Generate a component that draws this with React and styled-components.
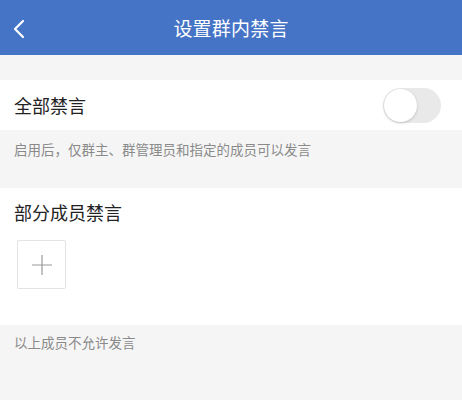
import React from "react";
import styled, { createGlobalStyle } from "styled-components";

const Global = createGlobalStyle`
  html, body { margin: 0; padding: 0; background: #f5f5f5; }
  body { font-family: "Noto Sans CJK SC", "Noto Sans", sans-serif; }
  * { box-sizing: border-box; }
`;

const Page = styled.div`
  width: 462px;
  height: 400px;
  background: #f5f5f5;
  display: flex;
  flex-direction: column;
  overflow: hidden;
`;

const Header = styled.div`
  height: 55px;
  background: #4574c6;
  display: flex;
  align-items: center;
  justify-content: center;
  position: relative;
  flex-shrink: 0;
`;

const Back = styled.div`
  position: absolute;
  left: 12px;
  top: 19px;
  width: 16px;
  height: 20px;
  display: flex;
`;

const Title = styled.div`
  color: #fff;
  font-size: 19px;
  line-height: 1;
  letter-spacing: 0.2px;
`;

const Gap = styled.div`
  height: ${(p) => p.h}px;
  flex-shrink: 0;
`;

const Row = styled.div`
  height: 50px;
  background: #fff;
  display: flex;
  align-items: center;
  justify-content: space-between;
  padding: 0 20px 0 14px;
  flex-shrink: 0;
`;

const Label = styled.div`
  font-size: 18px;
  color: #222;
  line-height: 1;
`;

const Track = styled.div`
  width: 58px;
  height: 35px;
  border-radius: 18px;
  background: #e9e9e9;
  position: relative;
  margin-right: 1px;
`;

const Knob = styled.div`
  position: absolute;
  left: 1px;
  top: 1px;
  width: 33px;
  height: 33px;
  border-radius: 50%;
  background: #fff;
  box-shadow: 0 1px 3px rgba(0, 0, 0, 0.18);
`;

const Note = styled.div`
  height: ${(p) => p.h}px;
  padding: ${(p) => p.pt}px 14px 0;
  font-size: 13.5px;
  color: #8a8a8a;
  line-height: 1;
  flex-shrink: 0;
`;

const Section = styled.div`
  background: #fff;
  height: 137px;
  padding: 15px 14px 0;
  display: flex;
  flex-direction: column;
  flex-shrink: 0;
`;

const AddBox = styled.div`
  margin-top: 19px;
  margin-left: 3px;
  width: 49px;
  height: 49px;
  border: 1px solid #e3e3e3;
  border-radius: 2px;
  display: flex;
  align-items: center;
  justify-content: center;
`;

export default function App() {
  return (
    <>
      <Global />
      <Page>
        <Header>
          <Back>
            <svg width="16" height="20" viewBox="0 0 16 20">
              <path d="M11 2 L3 10 L11 18" fill="none" stroke="#fff" strokeWidth="2.2" strokeLinecap="round" strokeLinejoin="round" />
            </svg>
          </Back>
          <Title>设置群内禁言</Title>
        </Header>
        <Gap h={25} />
        <Row>
          <Label>全部禁言</Label>
          <Track>
            <Knob />
          </Track>
        </Row>
        <Note h={58} pt={13}>启用后，仅群主、群管理员和指定的成员可以发言</Note>
        <Section>
          <Label>部分成员禁言</Label>
          <AddBox>
            <svg width="20" height="20" viewBox="0 0 20 20">
              <path d="M10 0 V20 M0 10 H20" stroke="#9a9a9a" strokeWidth="1.2" />
            </svg>
          </AddBox>
        </Section>
        <Note h={75} pt={11}>以上成员不允许发言</Note>
      </Page>
    </>
  );
}
